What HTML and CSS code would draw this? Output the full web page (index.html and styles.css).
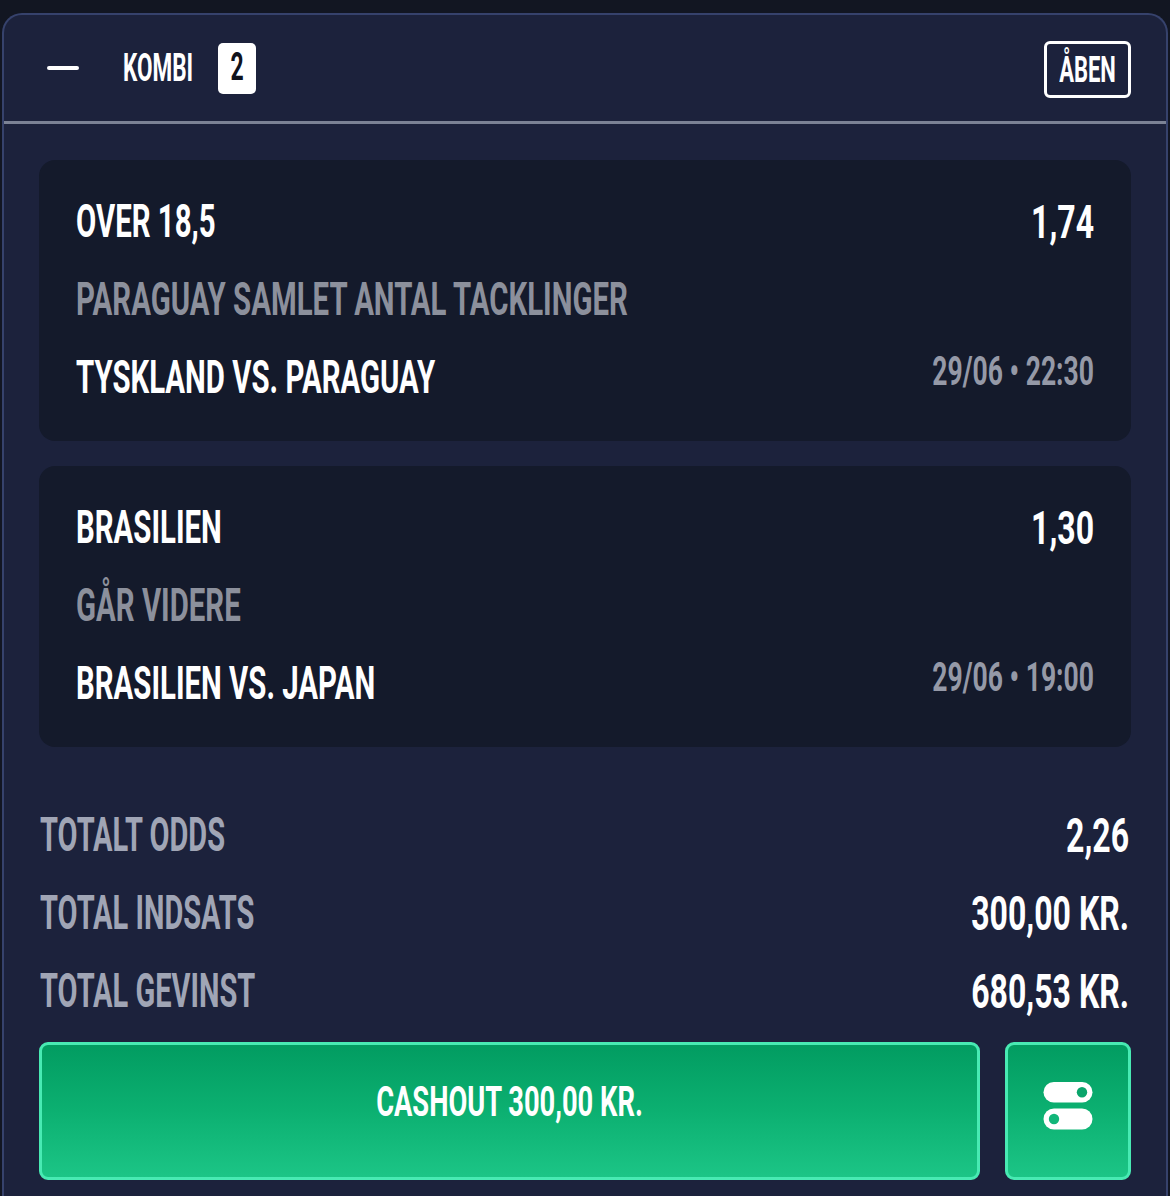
FILE: index.html
```html
<!DOCTYPE html>
<html lang="da">
<head>
<meta charset="utf-8">
<title>Kombi</title>
<link rel="stylesheet" href="styles.css">
</head>
<body>
<div class="panel">
  <div class="head">
    <div class="head-left">
      <span class="minus"></span>
      <span class="t kombi">KOMBI</span>
      <span class="badge"><span class="t num">2</span></span>
    </div>
    <div class="open"><span class="t open-txt">ÅBEN</span></div>
  </div>
  <div class="content">
    <div class="card">
      <div class="row"><span class="t main">OVER 18,5</span><span class="t odds">1,74</span></div>
      <div class="row"><span class="t main sub">PARAGUAY SAMLET ANTAL TACKLINGER</span></div>
      <div class="row"><span class="t main">TYSKLAND VS. PARAGUAY</span><span class="t date">29/06 • 22:30</span></div>
    </div>
    <div class="card">
      <div class="row"><span class="t main">BRASILIEN</span><span class="t odds">1,30</span></div>
      <div class="row"><span class="t main sub">GÅR VIDERE</span></div>
      <div class="row"><span class="t main">BRASILIEN VS. JAPAN</span><span class="t date">29/06 • 19:00</span></div>
    </div>
    <div class="totals">
      <div class="trow"><span class="t tot label">TOTALT ODDS</span><span class="t val">2,26</span></div>
      <div class="trow"><span class="t tot label">TOTAL INDSATS</span><span class="t val">300,00 KR.</span></div>
      <div class="trow"><span class="t tot label">TOTAL GEVINST</span><span class="t val">680,53 KR.</span></div>
    </div>
    <div class="actions">
      <div class="btn cashout"><span class="t cash-txt">CASHOUT 300,00 KR.</span></div>
      <div class="btn toggle">
        <svg class="toggle-icon" width="50" height="48" viewBox="0 0 50 48">
          <rect x="0.5" y="0" width="49" height="20.5" rx="10.25" fill="#fff"/>
          <circle cx="39" cy="10.25" r="5.2" fill="#0aa56b"/>
          <rect x="0.5" y="26.5" width="49" height="21" rx="10.5" fill="#fff"/>
          <circle cx="11" cy="37" r="5.2" fill="#12b679"/>
        </svg>
      </div>
    </div>
  </div>
</div>
</body>
</html>
```

FILE: styles.css
```css
html, body {
  margin: 0;
  padding: 0;
}

body {
  width: 1170px;
  height: 1196px;
  overflow: hidden;
  background: #121622;
  font-family: Roboto, "Liberation Sans", sans-serif;
  font-weight: 700;
  color: #ffffff;
}

.panel {
  box-sizing: border-box;
  margin: 13px 2px 0 2px;
  height: 1183px;
  background: #1c223c;
  border: 2px solid #36426c;
  border-bottom: none;
  border-radius: 20px 20px 0 0;
}

/* condensed look: natural widths, stretched vertically around the baseline */
.t {
  display: inline-block;
  white-space: nowrap;
  transform: scaleY(var(--sy));
  transform-origin: 50% var(--oy);
}

.head {
  height: 106px;
  border-bottom: 3px solid #7b8295;
  display: flex;
  align-items: center;
  justify-content: space-between;
  padding: 0 35px 0 43px;
}

.head-left {
  display: flex;
  align-items: center;
}

.minus {
  width: 32px;
  height: 4px;
  border-radius: 2px;
  background: #ffffff;
  margin-right: 44px;
}

.kombi {
  font-size: 22.5px;
  line-height: 30px;
  --sy: 1.7;
  --oy: 15px;
  margin-top: -3px;
}

.badge {
  margin-left: 25px;
  width: 38px;
  height: 51px;
  border-radius: 5px;
  background: #ffffff;
  color: #10131c;
  display: flex;
  align-items: center;
  justify-content: center;
}

.num {
  font-size: 23px;
  line-height: 30px;
  --sy: 1.65;
  --oy: 15px;
}

.open {
  box-sizing: border-box;
  width: 87px;
  height: 57px;
  border: 3px solid #ffffff;
  border-radius: 6px;
  display: flex;
  align-items: center;
  justify-content: center;
  margin-top: 2px;
}

.open-txt {
  font-size: 22px;
  line-height: 30px;
  --sy: 1.67;
  --oy: 15px;
  margin-top: 2px;
}

.content {
  padding: 36px 35px 0 35px;
}

.card {
  background: #141a2b;
  border-radius: 16px;
  padding: 44px 37px 34px 37px;
  display: flex;
  flex-direction: column;
  gap: 31px;
  margin-bottom: 25px;
}

.row {
  height: 47px;
  display: flex;
  align-items: flex-start;
  justify-content: space-between;
}

.main {
  font-size: 29.4px;
  line-height: 47px;
  --sy: 1.6;
  --oy: 33.6px;
}

.odds {
  font-size: 32px;
  line-height: 47px;
  --sy: 1.47;
  --oy: 34.4px;
}

.sub {
  color: #8c909c;
}

.date {
  font-size: 26.5px;
  line-height: 31px;
  --sy: 1.54;
  --oy: 24.6px;
  color: #9599a7;
}

.totals {
  margin-top: 70px;
  padding: 0 2px 0 1px;
  display: flex;
  flex-direction: column;
  gap: 30px;
}

.trow {
  height: 48px;
  display: flex;
  justify-content: space-between;
}

.tot {
  font-size: 29px;
  line-height: 48px;
  --sy: 1.68;
  --oy: 33.9px;
}

.val {
  font-size: 32px;
  line-height: 48px;
  --sy: 1.53;
  --oy: 34.9px;
}

.label {
  color: #a0a5b5;
}

.actions {
  margin-top: 21px;
  display: flex;
  gap: 25px;
}

.btn {
  box-sizing: border-box;
  height: 138px;
  border: 3px solid #48eab3;
  border-radius: 9px;
  background: linear-gradient(180deg, #029c61 0%, #0cb071 50%, #1cc586 100%);
  display: flex;
  align-items: center;
  justify-content: center;
}

.cashout {
  flex: 1;
  padding-bottom: 18px;
}

.cash-txt {
  font-size: 27.3px;
  line-height: 40px;
  --sy: 1.55;
  --oy: 20px;
}

.toggle {
  width: 126px;
  padding-bottom: 10px;
}

.toggle-icon {
  display: block;
}
```
